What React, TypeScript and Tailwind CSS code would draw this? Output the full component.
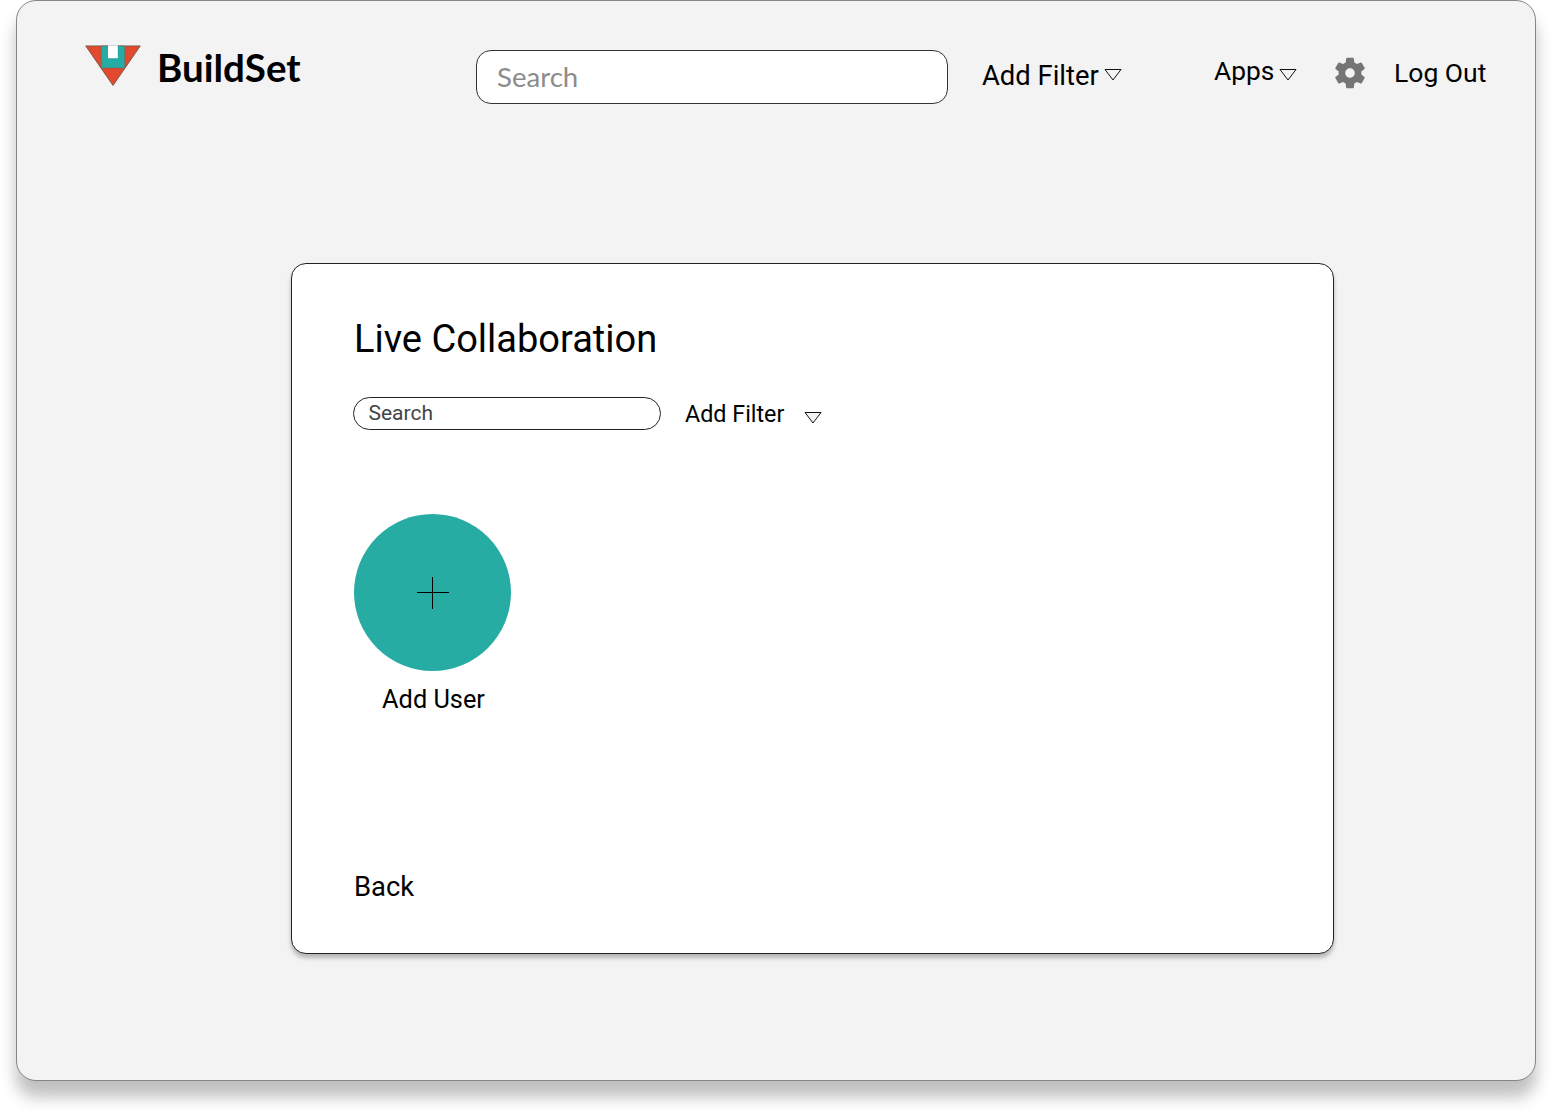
import React from "react";

function Caret({ className = "", fill = "none" }: { className?: string; fill?: string }) {
  return (
    <svg className={`shrink-0 ${className}`} width="18" height="12" viewBox="0 0 18 12" fill={fill} stroke="#111" strokeWidth="1">
      <path d="M1 0.5H17L9 11Z" />
    </svg>
  );
}

function Logo() {
  return (
    <svg className="mt-[43px] shrink-0" width="56" height="43" viewBox="0 0 56 43">
      <path d="M0.7 1.9H55.3L28 41.5Z" fill="#e2492f" stroke="#66503f" strokeWidth="0.8" />
      <path d="M16.2 2H39.8V24H16.2Z" fill="#27aca4" stroke="#5b6b62" strokeWidth="0.6" />
      <path d="M23 1.4H32.8V14.2H23Z" fill="#fff" />
    </svg>
  );
}

function Gear() {
  return (
    <svg className="ml-[32.5px] mr-[-0.5px] mt-[52.5px] shrink-0" width="38" height="38" viewBox="0 0 24 24" fill="#757575">
      <path d="M19.14 12.94c.04-.3.06-.61.06-.94 0-.32-.02-.64-.07-.94l2.03-1.58c.18-.14.23-.41.12-.61l-1.92-3.32c-.12-.22-.37-.29-.59-.22l-2.39.96c-.5-.38-1.03-.7-1.62-.94l-.36-2.54c-.04-.24-.24-.41-.48-.41h-3.84c-.24 0-.43.17-.47.41l-.36 2.54c-.59.24-1.13.57-1.62.94l-2.39-.96c-.22-.08-.47 0-.59.22L2.74 8.87c-.12.21-.08.47.12.61l2.03 1.58c-.05.3-.09.63-.09.94s.02.64.07.94l-2.03 1.58c-.18.14-.23.41-.12.61l1.92 3.32c.12.22.37.29.59.22l2.39-.96c.5.38 1.03.7 1.62.94l.36 2.54c.05.24.24.41.48.41h3.84c.24 0 .44-.17.47-.41l.36-2.54c.59-.24 1.13-.56 1.62-.94l2.39.96c.22.08.47 0 .59-.22l1.92-3.32c.12-.22.07-.47-.12-.61l-2.01-1.58zM12 15c-1.65 0-3-1.35-3-3s1.35-3 3-3 3 1.35 3 3-1.35 3-3 3z" />
    </svg>
  );
}

function Header() {
  return (
    <header className="flex h-[150px] items-start whitespace-nowrap pl-[68px]">
      <Logo />
      <h1 className="ml-4 mt-[42px] w-[319px] shrink-0 font-['Lato',sans-serif] text-[38.5px] font-bold leading-[48px]">BuildSet</h1>
      <div className="mt-[49px] flex h-[54px] w-[472px] shrink-0 items-center rounded-[15px] border border-[#333] bg-white pl-5 font-['Lato',sans-serif] text-[27.6px] text-[#8c8c8c]">
        Search
      </div>
      <button className="ml-[34px] mt-[59px] flex w-[232px] shrink-0 items-start text-[27.4px] leading-8">
        <span className="w-[122px] text-left">Add Filter</span>
        <Caret className="mt-[9px]" />
      </button>
      <button className="mt-[54px] flex w-[84px] shrink-0 items-start text-[26.3px] leading-8">
        <span className="w-[65px] text-left">Apps</span>
        <Caret className="mt-[14px]" />
      </button>
      <Gear />
      <button className="ml-[26px] mt-[56px] text-[26.5px] leading-8">Log Out</button>
    </header>
  );
}

function CollaborationCard() {
  return (
    <main className="ml-[274px] mt-[112px] flex h-[691px] w-[1043px] flex-col items-start rounded-[15px] border border-[#222] bg-white pl-[62px] shadow-[0_4px_4px_rgba(0,0,0,0.25)]">
      <h2 className="mt-[51px] text-[38px] leading-[48px]">Live Collaboration</h2>
      <div className="mt-[34px] flex items-start">
        <div className="-ml-px flex h-[33px] w-[308px] items-center rounded-full border border-[#222] pb-px pl-[14.5px] text-[21px] leading-6 text-[#444]">Search</div>
        <button className="ml-6 mt-px flex items-start text-[23.3px] leading-8">
          <span className="w-[119px] text-left">Add Filter</span>
          <Caret className="mt-[14px]" fill="#f3f3f3" />
        </button>
      </div>
      <div className="mt-[84px] flex w-[157px] flex-col items-center">
        <button className="flex size-[157px] items-center justify-center rounded-full bg-[#27aca4]">
          <svg width="32" height="32" viewBox="0 0 32 32" stroke="#000" strokeWidth="1">
            <path d="M15.5 0V32M0 15.5H32" />
          </svg>
        </button>
        <span className="ml-[2px] mt-[13px] text-[25.3px] leading-8">Add User</span>
      </div>
      <button className="mt-[155px] text-[27.4px] leading-8">Back</button>
    </main>
  );
}

export default function App() {
  return (
    <div className="h-[1113px] w-[1552px] overflow-hidden bg-white px-4 font-['Roboto',sans-serif] text-black">
      <div className="flex h-[1081px] flex-col rounded-[20px] border border-[#858585] bg-[#f3f3f3] shadow-[0_16px_16px_rgba(0,0,0,0.25)]">
        <Header />
        <CollaborationCard />
      </div>
    </div>
  );
}
